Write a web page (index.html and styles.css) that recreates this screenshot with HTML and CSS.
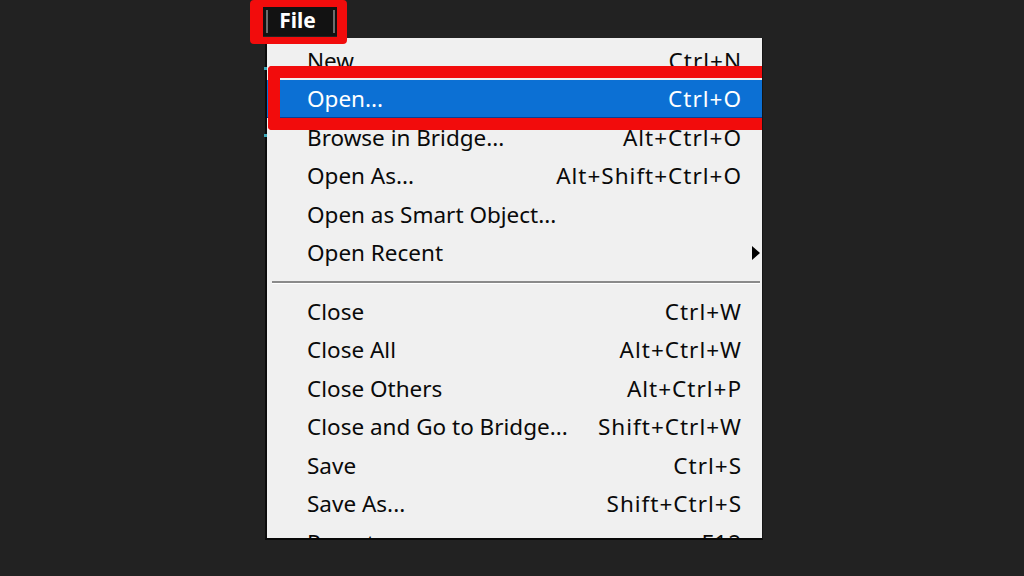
FILE: index.html
```html
<!DOCTYPE html>
<html lang="en">
<head>
    <meta charset="UTF-8">
    <meta name="viewport" content="width=device-width, initial-scale=1.0">
    <title>File menu</title>
    <link rel="stylesheet" href="styles.css">
</head>
<body>
    <header class="menubar">
        <div class="file-label"><span>File</span></div>
    </header>

    <main class="menu">
        <div class="item"><span>New...</span><span class="key">Ctrl+N</span></div>
        <div class="item active"><span>Open...</span><span class="key">Ctrl+O</span></div>
        <div class="item"><span>Browse in Bridge...</span><span class="key">Alt+Ctrl+O</span></div>
        <div class="item"><span>Open As...</span><span class="key">Alt+Shift+Ctrl+O</span></div>
        <div class="item"><span>Open as Smart Object...</span><span class="key"></span></div>
        <div class="item submenu"><span>Open Recent</span><span class="key"></span></div>
        <div class="separator"></div>
        <div class="item"><span>Close</span><span class="key">Ctrl+W</span></div>
        <div class="item"><span>Close All</span><span class="key">Alt+Ctrl+W</span></div>
        <div class="item"><span>Close Others</span><span class="key">Alt+Ctrl+P</span></div>
        <div class="item"><span>Close and Go to Bridge...</span><span class="key">Shift+Ctrl+W</span></div>
        <div class="item"><span>Save</span><span class="key">Ctrl+S</span></div>
        <div class="item"><span>Save As...</span><span class="key">Shift+Ctrl+S</span></div>
        <div class="item"><span>Revert</span><span class="key">F12</span></div>
    </main>

    <!-- annotation boxes drawn over the menu -->
    <div class="callout callout-file"></div>
    <div class="callout callout-open"></div>
    <span class="handle handle-top"></span>
    <span class="handle handle-bottom"></span>
</body>
</html>
```

FILE: styles.css
```css
body {
    margin: 0;
    width: 1024px;
    height: 576px;
    overflow: hidden;
    position: relative;
    background-color: #222222;
    font-family: 'Noto Sans', 'DejaVu Sans', sans-serif;
    color: #0a0a0a;
}

.menubar {
    height: 38px;
    box-sizing: border-box;
    padding: 7px 0 0 263px;
}

.file-label {
    display: inline-block;
    width: 74px;
    height: 29px;
    box-sizing: border-box;
    padding: 3px 2px 0 3px;
    background-color: #121212;
}

.file-label span {
    display: block;
    height: 23px;
    border-left: 2px solid #6c6c6c;
    border-right: 2px solid #6c6c6c;
    color: #fff;
    font-weight: bold;
    font-size: 21px;
    line-height: 21px;
    text-align: center;
    padding-right: 6px;
}

.menu {
    display: block;
    margin-left: 265px;
    width: 495px;
    height: 497px;
    box-sizing: content-box;
    padding-top: 3px;
    background-color: #f0f0f0;
    border-left: 2px solid #0c0c0c;
    border-right: 1px solid #151515;
    border-bottom: 2px solid #080808;
    overflow: hidden;
}

.item {
    position: relative;
    height: 38.5px;
    display: flex;
    align-items: center;
    justify-content: space-between;
    padding: 0 20px 0 40px;
    font-size: 22.5px;
}

.key {
    letter-spacing: 1px;
}

.item.active {
    background-color: #0c70d4;
    color: #fff;
    box-shadow: inset 0 -1px 0 #0a3f94;
}

.submenu::after {
    content: "";
    position: absolute;
    right: 2px;
    top: 12px;
    border-left: 8px solid #000;
    border-top: 7px solid transparent;
    border-bottom: 7px solid transparent;
}

.separator {
    height: 20px;
    box-sizing: border-box;
    padding-top: 9px;
    margin: 0 2px 0 5px;
}

.separator::before {
    content: "";
    display: block;
    border-top: 2px solid #8a8a8a;
    border-bottom: 1px solid #fff;
}

.callout {
    position: absolute;
    box-sizing: border-box;
    border: 12px solid #f20c0c;
    border-radius: 4px;
}

.callout-file {
    left: 250px;
    top: 0;
    width: 97px;
    height: 44px;
    border-width: 7px 10px 7px 13px;
}

.callout-open {
    left: 268px;
    top: 66px;
    width: 494px;
    height: 64px;
    border-right: none;
    border-radius: 4px 0 0 4px;
}

.handle {
    position: absolute;
    left: 264px;
    width: 3px;
    height: 3px;
    background-color: #3aa7b8;
}

.handle-top {
    top: 67px;
}

.handle-bottom {
    top: 134px;
}
```
